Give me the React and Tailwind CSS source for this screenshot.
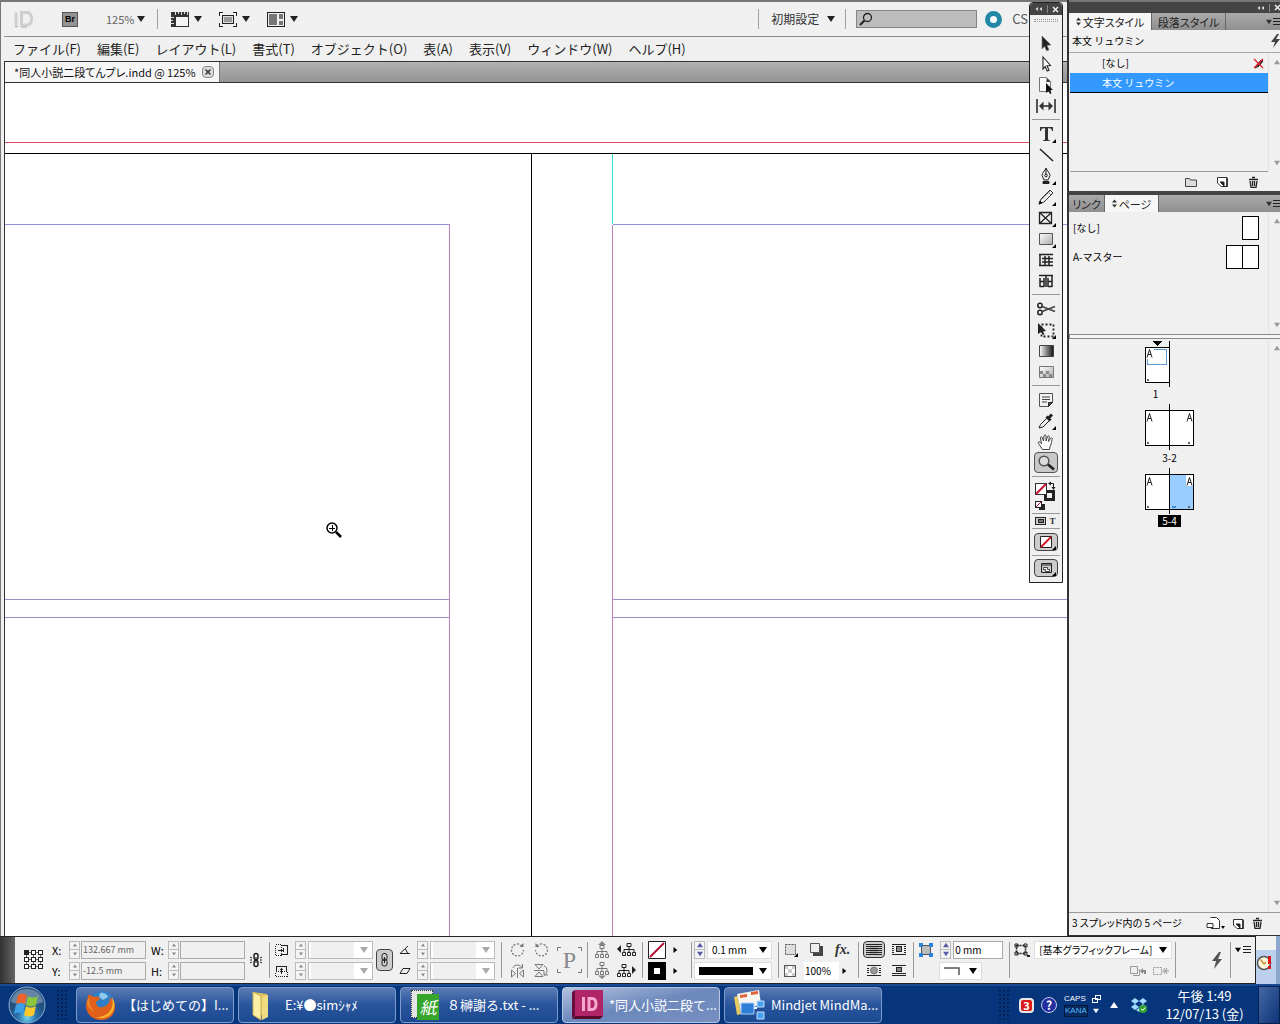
import React, { useState } from 'react';

const menus = ['ファイル(F)', '編集(E)', 'レイアウト(L)', '書式(T)', 'オブジェクト(O)', '表(A)', '表示(V)', 'ウィンドウ(W)', 'ヘルプ(H)'];

// Small filled triangles used all over the chrome
function Caret({ dir = 'down', className = 'w-2 h-2 text-[#222]' }) {
  const d = {
    down: 'M0 1h8L4 7z',
    up: 'M0 7h8L4 1z',
    right: 'M2 0v8l5-4z',
    left: 'M6 0v8L1 4z',
  }[dir];
  return (
    <svg viewBox="0 0 8 8" className={`shrink-0 ${className}`} fill="currentColor" aria-hidden="true">
      <path d={d} />
    </svg>
  );
}

function Svg({ w = 20, h = 20, children, className = '', crisp }) {
  return (
    <svg
      width={w}
      height={h}
      viewBox={`0 0 ${w} ${h}`}
      fill="none"
      stroke="#222"
      shapeRendering={crisp ? 'crispEdges' : undefined}
      className={`shrink-0 ${className}`}
      aria-hidden="true"
    >
      {children}
    </svg>
  );
}

function AppBar() {
  return (
    <div className="flex h-[35px] items-center justify-between border-b border-[#8c8c8c] ml-[3px] pl-[10px] pr-[39px]">
      <div className="flex items-center">
        <Svg w={20} h={18}>
          <path d="M2 3v13M7.500 3v12.500h5c3.500 0 5-2 5-6s-1.500-6.500-5-6.500z" stroke="#cfcfcf" strokeWidth="3" transform="translate(0 -.5)" />
          <path d="M1 16.500h3M7 17h6" stroke="#a8a8a8" />
        </Svg>
        <button className="ml-7 h-[15px] w-4 border border-[#555] bg-[#929292] text-[9px] font-bold leading-[13px] text-black font-['Liberation_Sans',sans-serif]">Br</button>
        <button className="ml-7 flex items-center gap-[7px] text-[11px] leading-4 text-[#666]">
          <span className="w-6">125%</span>
          <Caret />
        </button>
        <span className="ml-3 h-5 w-px bg-[#a0a0a0]" />
        <button className="ml-[13px] flex items-center gap-[5px]" aria-label="表示オプション">
          <Svg w={18} h={15} crisp>
            <path d="M0 0h18v15H0z" fill="#333" stroke="none" />
            <path d="M5 5h12v9H5z" fill="#f4f4f4" stroke="none" />
            <path d="M4 0v3M7 0v2M10 0v3M13 0v2M16 0v3M0 5h3M0 8h2M0 11h3" stroke="#ddd" />
          </Svg>
          <Caret />
        </button>
        <button className="ml-[17px] flex items-center gap-[5px]" aria-label="スクリーンモード">
          <Svg w={18} h={15} crisp>
            <path d="M.5 4V.5H4M14 .5h3.500V4M17.500 11v3.500H14M4 14.500H.5V11" />
            <path d="M3.500 3.500h11v8h-11z" fill="#999" />
            <path d="M4.500 4.500h9v6h-9z" stroke="#ddd" />
          </Svg>
          <Caret />
        </button>
        <button className="ml-[17px] flex items-center gap-[5px]" aria-label="ドキュメントレイアウト">
          <Svg w={18} h={15} crisp>
            <path d="M.5.5h17v14H.5z" fill="#eee" />
            <path d="M2 2h8v11H2zM12 2h4v5h-4zM12 9h4v4h-4z" fill="#777" stroke="none" />
          </Svg>
          <Caret />
        </button>
      </div>
      <div className="flex items-center">
        <span className="h-5 w-px bg-[#a0a0a0]" />
        <button className="ml-3 flex items-center gap-2 text-[12px] leading-4 text-[#333]">
          初期設定
          <Caret />
        </button>
        <span className="ml-[10px] h-5 w-px bg-[#a0a0a0]" />
        <label className="ml-[10px] flex h-[18px] w-[121px] items-center border border-[#858585] bg-[#bdbdbd] pl-0.5">
          <Svg w={14} h={14}>
            <circle cx="8.500" cy="5.500" r="4" strokeWidth="1.300" />
            <path d="M5.500 8.500L1 13" strokeWidth="2" />
          </Svg>
          <input type="search" aria-label="検索" className="min-w-0 flex-1 bg-transparent text-[11px] outline-none" />
        </label>
        <span className="ml-2 size-[17px] rounded-full border-[5px] border-[#2388a8] bg-white" />
        <span className="ml-[10px] text-[13px] leading-4 text-[#555]">CS</span>
      </div>
    </div>
  );
}

function MenuBar() {
  return (
    <nav className="flex h-6 items-center gap-4 pl-3 text-[13px] leading-4 text-[#222]">
      {menus.map((m) => (
        <button key={m} className="whitespace-nowrap">{m}</button>
      ))}
    </nav>
  );
}

function TabStrip() {
  return (
    <div className="ml-[3px] flex h-[22px] border-y border-l border-[#333] bg-linear-to-b from-[#b2b2b2] to-[#939393]">
      <div className="flex items-center gap-1.5 border-r border-[#777] bg-[#f6f6f6] pl-[9px] pr-[5px] text-[11px] leading-4 text-[#111]">
        <span className="whitespace-nowrap [font-feature-settings:'palt']">*同人小説二段てんプレ.indd @ 125%</span>
        <button aria-label="閉じる" className="flex size-3 items-center justify-center rounded-sm border border-[#888] bg-[#ddd]">
          <Svg w={8} h={8}><path d="M1.500 1.500l5 5M6.500 1.500l-5 5" strokeWidth="1.200" /></Svg>
        </button>
      </div>
    </div>
  );
}

// Page edges, bleed, margins and column guides of the open spread
function Canvas() {
  return (
    <main className="relative ml-[3px] min-h-0 flex-1 overflow-hidden border-l border-[#333] bg-white">
      <svg className="absolute inset-0 h-full w-full" shapeRendering="crispEdges" fill="none">
        <path d="M0 59.500H4000" stroke="#e0505f" />
        <path d="M0 70.500H4000M526.500 70V4000" stroke="#000" />
        <path d="M607.500 71V141" stroke="#30e4e0" />
        <path d="M0 141.500H445M608 141.500H4000" stroke="#9090dc" />
        <path d="M0 516.500H445M0 534.500H445M608 516.500H4000M608 534.500H4000" stroke="#9a90c4" />
        <path d="M444.500 141V4000M607.500 142V4000" stroke="#c080c0" />
        <circle cx="327" cy="445" r="5" stroke="#000" strokeWidth="1.500" shapeRendering="auto" />
        <path d="M324 445.500h6M327.500 442v6" stroke="#000" />
        <path d="M331 449l5 5" stroke="#000" strokeWidth="2.500" shapeRendering="auto" />
      </svg>
    </main>
  );
}

const corner = <path d="M20 15v4h-4z" fill="#000" stroke="none" />;

const toolGroups = [
  [
    ['選択', <path key="a" d="M6 3l9 9-4 .3 2 4.500-2.500 1-2-4.500L6 16z" fill="#222" stroke="#777" strokeWidth=".7" />],
    ['ダイレクト選択', <path key="a" d="M7 3l7.500 8.500-3.500.3 2 4.500-1.800.8-2-4.500L7 15z" fill="#fff" strokeWidth="1.100" />],
    ['ページ', <g key="a"><path d="M3.500 2.500h7l4 4v10h-11z" fill="#fafafa" stroke="#777" /><path d="M10.500 3v4h4z" fill="#333" stroke="none" /><path d="M10 8l7 7-3 .3 1.500 3-1.500.7-1.500-3L10 18z" fill="#111" stroke="none" /></g>],
    ['間隔', <g key="a"><path d="M1 3v14M19 3v14" strokeWidth="1.500" /><path d="M5 10h10" strokeWidth="1.500" /><path d="M7.500 5.500L3 10l4.500 4.500zM12.500 5.500L17 10l-4.500 4.500z" fill="#333" stroke="none" /></g>],
  ],
  [
    ['文字', <g key="a"><path d="M4 3h13v4h-1c-.3-2-1-2.700-3-2.700h-1V15c0 1 .5 1.300 2 1.300V17H7v-.7c1.500 0 2-.3 2-1.300V4.300H8C6 4.300 5.300 5 5 7H4z" fill="#333" stroke="none" />{corner}</g>],
    ['線', <path key="a" d="M4 4l13 12" strokeWidth="1.500" />],
    ['ペン', <g key="a"><path d="M10 2c-1 3-4 5-4 7.500L8 14h4l2-4.500C14 7 11 5 10 2z" fill="#eee" /><path d="M10 3v6" /><circle cx="10" cy="9.500" r="1.300" /><path d="M7 15.500h6v2H7z" fill="#222" />{corner}</g>],
    ['鉛筆', <g key="a"><path d="M3 17l2-5 9-9 3 3-9 9z" fill="#eee" stroke="#333" /><path d="M3 17l1-3 2 2z" fill="#000" /><path d="M6 12l8-8M12 5l3 3" stroke="#888" />{corner}</g>],
    ['長方形フレーム', <g key="a"><path d="M3.500 4.500h12v11h-12zM3.500 4.500l12 11M15.500 4.500l-12 11" strokeWidth="1.300" />{corner}</g>],
    ['長方形', <g key="a"><path d="M3.500 4.500h13v11h-13z" fill="url(#rectFill)" stroke="#555" />{corner}</g>],
    ['横組みグリッド', <path key="a" d="M3 4.500h14M4 4v11M6 8.500h11M6 12h11M3 15.500h14M9 6v9M13 6v9" strokeWidth="1.500" />],
    ['縦組みグリッド', <path key="a" d="M3 4.500h14M4 7v9M8 7v9M4 10.500h4M4 15.500h4M12 7v9M16 5v11M12 10.500h4M12 15.500h4M10 5v11" strokeWidth="1.500" />],
  ],
  [
    ['はさみ', <g key="a"><circle cx="4" cy="6.500" r="2.200" strokeWidth="1.500" /><circle cx="4" cy="13.500" r="2.200" strokeWidth="1.500" /><path d="M6 7.500l13 5M6 12.500l13-5" stroke="#444" strokeWidth="1.800" /></g>],
    ['自由変形', <g key="a"><path d="M5.500 4.500h12v12h-12z" strokeDasharray="2 2" strokeWidth="1.800" /><path d="M2 3l8 8-3 .5 1.500 3-1.500.5-2-3L2 14z" fill="#222" stroke="none" />{corner}</g>],
    ['グラデーション', <path key="a" d="M3.500 4.500h14v11h-14z" fill="url(#gradTool)" stroke="#444" />],
    ['ぼかし', <g key="a"><path d="M3.500 4.500h14v11h-14z" fill="url(#rectFill)" stroke="#777" /><path d="M4 9h3v3H4zM10 9h3v3h-3zM7 12h3v3H7zM13 12h3v3h-3z" fill="#888" stroke="none" /></g>],
  ],
  [
    ['注釈', <g key="a"><path d="M3.500 3.500h13v9l-4 4h-9z" fill="#f2f2f2" stroke="#555" /><path d="M6 7h8M6 9.500h8M6 12h5" stroke="#444" /><path d="M16.500 12.500h-4v4z" fill="#555" /></g>],
    ['スポイト', <g key="a"><path d="M3 17l1.500-3.500 7-7 2.500 2.500-7 7z" fill="#eee" /><path d="M10.500 5.500l4 4M12.500 7l3.500-3.500" strokeWidth="3" />{corner}</g>],
    ['手のひら', <path key="a" d="M6.500 17.500l-4-6c-1-1.500.5-2.300 1.500-1.200l1.500 1.500L4.500 6c-.2-1.500 1.400-1.600 1.800-.3L7.500 9 8 4c.2-1.500 2-1.500 2 0v5l1.500-4.500c.5-1.300 2-1 1.800.4L12.500 9.500l2-3c.8-1.200 2.200-.4 1.700.9-1 2.500-.7 5-2.200 7.100l-.5 3z" fill="#fff" stroke="#444" />],
    ['ズーム', <g key="a"><circle cx="8" cy="8" r="4.800" fill="#ddd" stroke="#555" strokeWidth="1.500" /><path d="M12 11.500l6 5" strokeWidth="2.800" /></g>],
  ],
];

function ToolSeparator() {
  return <div className="mx-0.5 my-[3px] h-px bg-[#999]" />;
}

function Toolbox() {
  const [active, setActive] = useState('ズーム');
  return (
    <aside className="absolute right-1 top-0 z-10 w-[34px] rounded-t border border-[#222] bg-[#f0f0f0]">
      <div className="flex h-3 items-center justify-end gap-1 rounded-t bg-[#444] pr-[3px] text-[#ddd]">
        <span className="flex">
          <Caret dir="left" className="h-2 w-1" />
          <Caret dir="left" className="h-2 w-1" />
        </span>
        <span className="h-2 w-px bg-[#888]" />
        <Svg w={7} h={7}><path d="M1 1l5 5M6 1L1 6" stroke="#eee" strokeWidth="1.500" /></Svg>
      </div>
      <div className="mx-1 mt-1 mb-[10px] h-[3px] border-y border-dotted border-[#999]" />
      <svg width="0" height="0" className="absolute" aria-hidden="true">
        <defs>
          <linearGradient id="rectFill" x2="1" y2="1"><stop stopColor="#fff" /><stop offset="1" stopColor="#aaa" /></linearGradient>
          <linearGradient id="gradTool"><stop stopColor="#fff" /><stop offset="1" stopColor="#111" /></linearGradient>
        </defs>
      </svg>
      {toolGroups.map((group, i) => (
        <div key={i}>
          {i > 0 && <ToolSeparator />}
          {group.map(([name, icon]) => (
            <button
              key={name}
              aria-label={name}
              onClick={() => setActive(name)}
              className={`mx-auto flex h-[21px] w-6 items-center justify-center ${active === name ? 'rounded-sm border border-[#555] bg-[#c8c8c8]' : ''}`}
            >
              <Svg>{icon}</Svg>
            </button>
          ))}
        </div>
      ))}
      <ToolSeparator />
      <div className="flex justify-center">
        <Svg w={24} h={30} crisp>
          <path d="M11.500 11.500h8v8h-8z" fill="#f0f0f0" stroke="#222" strokeWidth="3" />
          <path d="M1.500 3.500h11v11h-11z" fill="#fff" stroke="#333" />
          <path d="M2 14L12 4" stroke="#c01030" strokeWidth="2" shapeRendering="auto" />
          <path d="M16 3.500h3.500V8" shapeRendering="auto" />
          <path d="M17 1.500l-3 2 3 2zM17.500 7h4l-2 3z" fill="#222" stroke="none" shapeRendering="auto" />
          <path d="M5.500 24.500h5v5h-5z" fill="#222" />
          <path d="M1.500 21.500h6v6h-6z" fill="#fff" />
          <path d="M2 27l5-5" stroke="#c01030" shapeRendering="auto" />
        </Svg>
      </div>
      <ToolSeparator />
      <div className="flex h-2 items-center justify-center gap-1">
        <Svg w={11} h={8} crisp><path d="M.5.5h10v7H.5z" fill="#ccc" /><path d="M3 2.500h5v3H3z" fill="#777" /></Svg>
        <span className="w-2 text-[9px] font-bold leading-2 text-[#333] font-['Liberation_Serif',serif]">T</span>
      </div>
      <ToolSeparator />
      <button aria-label="適用なし" className="mx-auto my-1 flex h-[18px] w-6 items-center justify-center rounded-sm border border-[#444] bg-[#ccc]">
        <Svg w={20} h={16}>
          <path d="M4.500 2.500h11v11h-11z" fill="#fff" />
          <path d="M5 13L15 3" stroke="#d01020" strokeWidth="1.800" />
          <path d="M20 12v4h-4z" fill="#000" stroke="none" />
        </Svg>
      </button>
      <ToolSeparator />
      <button aria-label="標準モード" className="mx-auto mt-[3px] mb-[5px] flex h-[18px] w-6 items-center justify-center rounded-sm border border-[#444] bg-[#ccc]">
        <Svg w={20} h={16}>
          <path d="M5.500 3.500h10v9h-10zM5.500 5h10" />
          <path d="M7.500 7.500h4v2h2v2h-4v-2h-2z" fill="#fff" strokeWidth=".8" />
          <path d="M20 12v4h-4z" fill="#000" stroke="none" />
        </Svg>
      </button>
    </aside>
  );
}

function PanelTabs({ tabs, active }) {
  return (
    <div role="tablist" className="flex h-[17px] shrink-0 items-stretch bg-linear-to-b from-[#aaa] to-[#8f8f8f] text-[11px] leading-[16px] text-[#222] [font-feature-settings:'palt']">
      {tabs.map(([t, width]) => (
        <button
          key={t}
          role="tab"
          aria-selected={t === active}
          className={`flex items-center justify-center gap-0.5 whitespace-nowrap border-r border-[#666] ${width} ${t === active ? 'bg-[#f6f6f6]' : ''}`}
        >
          {t === active && (
            <Svg w={5} h={9}><path d="M0 3.500L2.500.5 5 3.500zM0 5.500l2.500 3 2.500-3z" fill="#333" stroke="none" /></Svg>
          )}
          {t}
        </button>
      ))}
      <span className="flex flex-1 items-center justify-end gap-px">
        <Caret className="h-1.5 w-1.5 text-[#333]" />
        <Svg w={7} h={9} crisp><path d="M0 1.500h7M0 4.500h7M0 7.500h7" /></Svg>
      </span>
    </div>
  );
}

function ScrollTrack() {
  return (
    <div className="flex w-3 shrink-0 flex-col items-end justify-between border-l border-[#e4e4e4] py-1.5">
      <Caret dir="up" className="h-1.5 w-1.5 text-[#999]" />
      <Caret className="h-1.5 w-1.5 text-[#999]" />
    </div>
  );
}

const folderIcon = <Svg w={12} h={10}><path d="M.5 1.500h4l1 1.500h6v6.500H.5z" fill="#ddd" stroke="#444" /></Svg>;
const newIcon = <Svg w={11} h={11}><path d="M.5 1.500h9.500v9H4L.5 7z" fill="#fff" stroke="#333" /><path d="M10 2v9H5" strokeWidth="1.500" /><path d="M3 6h4v4z" fill="#222" /></Svg>;
const trashIcon = <Svg w={11} h={12}><path d="M1 3.500h9M4 1.500h3M2 5l1 6.500h5L9 5M4.500 5v5M6.500 5v5" strokeWidth="1.300" /></Svg>;

function SheetPair({ selected, className = '' }) {
  return (
    <svg width="49" height="46" viewBox="0 0 49 46" shapeRendering="crispEdges" className={className} aria-hidden="true">
      <path d="M.5 6.500h48v35H.5z" fill="#fff" stroke="#000" />
      {selected && <path d="M25 7h23v34H25z" fill="#99ccff" />}
      {selected && <path d="M41 7h7v11h-7z" fill="#fff" />}
      <path d="M24.500 0v46" stroke="#000" />
      <path d="M2 17.500L4.500 9.500l2.500 8M3 14.500h3M42 17.500l2.500-8 2.500 8M43 14.500h3" fill="none" stroke="#222" shapeRendering="auto" />
      <path d="M2 38h2v2H2zM43 38h2v2h-2z" fill="#666" />
      {selected && <path d="M27 38h4v2h-4z" fill="#4a8fd0" />}
    </svg>
  );
}

function StylesPanel() {
  return (
    <section className="flex h-[178px] shrink-0 flex-col">
      <PanelTabs tabs={[['文字スタイル', 'w-[83px]'], ['段落スタイル', 'w-[74px]']]} active="文字スタイル" />
      <div className="flex h-[23px] items-center justify-between border-b border-[#aaa] pl-[3px] text-[10px] leading-4">
        <span>本文 リュウミン</span>
        <Svg w={9} h={14}><path d="M6 0L0 8h4l-2 6 7-9H5l3-5z" fill="#444" stroke="none" /></Svg>
      </div>
      <div className="flex min-h-0 flex-1">
        <ul className="ml-px flex-1 border-b border-[#999] text-[10px] leading-4">
          <li className="flex h-5 items-center justify-between pl-8 pr-1">
            [なし]
            <Svg w={11} h={11}><path d="M2 10l2-3 4-5 2 1-4 5z" fill="#333" /><path d="M1 1l9 9M10 1L1 10" stroke="#e8202c" strokeWidth="1.300" /></Svg>
          </li>
          <li className="flex h-5 items-center border-b border-black bg-[#3399ff] pl-8 text-white">本文 リュウミン</li>
        </ul>
        <ScrollTrack />
      </div>
      <div className="flex h-[19px] shrink-0 items-center justify-end gap-5 pr-[21px]">
        {folderIcon}
        {newIcon}
        {trashIcon}
      </div>
    </section>
  );
}

function PagesPanel() {
  return (
    <section className="flex min-h-0 flex-1 flex-col border-t-4 border-[#444]">
      <PanelTabs tabs={[['リンク', 'w-[36px]'], ['ページ', 'w-[54px]']]} active="ページ" />
      <div className="flex h-[122px] shrink-0">
        <div className="flex-1 pl-1 pr-[9px] pt-px text-[10px] leading-4">
          <div className="flex h-[29px] items-center justify-between">
            [なし]
            <span className="h-6 w-[17px] border border-black bg-white" />
          </div>
          <div className="flex h-[29px] items-center justify-between">
            A-マスター
            <span className="flex h-6 w-[33px] border border-black bg-white">
              <span className="w-4 border-r border-black" />
            </span>
          </div>
        </div>
        <ScrollTrack />
      </div>
      <div className="h-[5px] shrink-0 border border-r-0 border-[#888] bg-[#f6f6f6]" />
      <div className="flex min-h-0 flex-1">
        <div className="flex flex-1 flex-col items-center pt-px pl-0.5 text-[10px] leading-3">
          <svg width="49" height="48" viewBox="0 0 49 48" shapeRendering="crispEdges" aria-hidden="true">
            <path d="M8 1h9l-4.500 5z" />
            <path d="M.5 7.500h24v35H.5z" fill="#fff" stroke="#000" />
            <path d="M24.500 1v46" stroke="#000" />
            <path d="M9 9.500h12.500v15h-19V19" fill="none" stroke="#5b9bd5" />
            <path d="M2 17.500L4.500 9.500l2.500 8M3 14.500h3" fill="none" stroke="#222" shapeRendering="auto" />
            <path d="M2 39h2v2H2z" fill="#666" />
          </svg>
          <span className="mr-7">1</span>
          <SheetPair className="mt-1" />
          <span className="mt-0.5">3-2</span>
          <SheetPair selected className="mt-1" />
          <span className="mt-px bg-black px-1 text-white">5-4</span>
        </div>
        <ScrollTrack />
      </div>
      <div className="flex h-[23px] shrink-0 items-center border-t border-[#999] pl-[3px] pr-[17px] pb-0.5 text-[10px] leading-4">
        <span className="flex-1 whitespace-nowrap [font-feature-settings:'palt']">3 スプレッド内の 5 ページ</span>
        <span className="flex items-center gap-2">
          <Svg w={19} h={12}><path d="M4.500.5h6l3 3v8H5M1 6.500h6v4H1z" fill="#fff" stroke="#333" /><path d="M15 9h4l-2 3z" fill="#000" stroke="none" /></Svg>
          {newIcon}
          {trashIcon}
        </span>
      </div>
    </section>
  );
}

function SidePanels() {
  return (
    <aside className="flex w-[213px] shrink-0 flex-col border-b border-l-2 border-[#333] bg-[#f0f0f0] text-black">
      <div className="flex h-[13px] shrink-0 items-center justify-end gap-1 border-t-2 border-[#777] bg-[#444] text-[#ddd]">
        <span className="flex">
          <Caret dir="left" className="h-2 w-1" />
          <Caret dir="left" className="h-2 w-1" />
        </span>
        <span className="h-2 w-px bg-[#888]" />
        <Svg w={6} h={7}><path d="M1 1l5 5M6 1L1 6" stroke="#eee" strokeWidth="1.500" /></Svg>
      </div>
      <StylesPanel />
      <PagesPanel />
    </aside>
  );
}

function Spinner({ on }) {
  const color = on ? 'h-1.5 w-1.5 text-[#5a5aa8]' : 'h-1 w-1 text-[#888]';
  return (
    <span className="flex h-[18px] w-[11px] shrink-0 flex-col border border-[#bbb] bg-[#f4f4f4]">
      <span className="flex flex-1 items-center justify-center border-b border-[#bbb]"><Caret dir="up" className={color} /></span>
      <span className="flex flex-1 items-center justify-center"><Caret className={color} /></span>
    </span>
  );
}

function NumberField({ label, value = '' }) {
  return (
    <label className="flex items-center gap-px text-[11px] leading-4">
      <span className="w-4">{label}:</span>
      <Spinner />
      <input defaultValue={value} className="h-[18px] w-[65px] border border-[#aaa] bg-[#f0f0f0] pl-px text-[9px] text-[#666]" />
    </label>
  );
}

function Combo({ label, value = '', width, disabled, children }) {
  return (
    <span className={`relative flex h-[18px] items-center border ${width} ${disabled ? 'border-[#bbb] bg-white' : 'border-[#ddd] bg-white'}`}>
      <select aria-label={label} disabled={disabled} className={`h-full w-full appearance-none px-1 text-[10px] leading-4 [font-feature-settings:'palt'] ${disabled ? 'm-0.5 mr-[18px] h-3.5 bg-[#f0f0f0]' : 'bg-transparent'}`}>
        <option>{value}</option>
      </select>
      <span className="pointer-events-none absolute inset-y-0 left-1 flex items-center">{children}</span>
      <span className="pointer-events-none absolute inset-y-0 right-1 flex items-center">
        <Caret className={disabled ? 'size-2 text-[#aaa]' : 'size-2 text-black'} />
      </span>
    </span>
  );
}

function Rows({ children, className = '' }) {
  return <div className={`flex shrink-0 flex-col justify-center gap-[3px] ${className}`}>{children}</div>;
}

function Row({ children, className = '' }) {
  return <div className={`flex h-[18px] items-center ${className}`}>{children}</div>;
}

function Rule({ className = '' }) {
  return <span className={`h-9 w-px shrink-0 bg-[#999] ${className}`} />;
}

const tree = (
  <path d="M5 .5h4v3H5zM7 3.500v3M2 9V6.500h10V9M7 6.500V9M.5 9.500h3v3h-3zM5.500 9.500h3v3h-3zM10.500 9.500h3v3h-3z" />
);

function ControlBar() {
  return (
    <div className="flex h-12 shrink-0 bg-[#f0f0f0]">
      <div className="flex min-w-0 flex-1 items-center border-y border-r border-[#222]">
        <div className="h-full w-[15px] shrink-0 bg-linear-to-r from-[#333] to-[#666]" />
        <Svg w={20} h={20} crisp className="ml-[9px]">
          <path d="M3 2.500h14M3 9.500h14M3 16.500h14M2.500 3v14M9.500 3v14M16.500 3v14" stroke="#666" />
          {[0, 7, 14].map((y) => [0, 7, 14].map((x) => (
            <path key={`${x}-${y}`} d={`M${x + 0.5} ${y + 0.5}h4v4h-4z`} fill={x + y === 0 ? '#222' : '#fff'} />
          )))}
        </Svg>
        <Rows className="ml-2">
          <NumberField label="X" value="132.667 mm" />
          <NumberField label="Y" value="-12.5 mm" />
        </Rows>
        <Rows className="ml-[5px]">
          <NumberField label="W" />
          <NumberField label="H" />
        </Rows>
        <Svg w={14} h={16} className="ml-1">
          <rect x="5" y="1.500" width="4" height="6" rx="2" strokeWidth="1.500" />
          <rect x="5" y="8.500" width="4" height="6" rx="2" strokeWidth="1.500" />
          <path d="M1 5l2 1M11 6l2-1M1 11l2-1M11 10l2 1M1 8h2M11 8h2M7 5v6" />
        </Svg>
        <Rule className="ml-1.5" />
        <Rows className="ml-[5px]">
          {['拡大・縮小 X', '拡大・縮小 Y'].map((label, i) => (
            <Row key={label}>
              <Svg w={13} h={12} crisp>
                {i === 0 ? (
                  <g><path d="M.5.5h6v11h-6z" strokeDasharray="1 1" /><path d="M6 1.500h6v9H6M3 6h6M8 4v4" /></g>
                ) : (
                  <g><path d="M.5 6.500h12v5H.5z" strokeDasharray="1 1" /><path d="M1.500 7V1.500h10V7M6.500 3v6M5 4.500h3" /></g>
                )}
              </Svg>
              <span className="ml-[7px]"><Spinner /></span>
              <Combo label={label} disabled width="ml-0.5 w-[65px]" />
            </Row>
          ))}
        </Rows>
        <button aria-label="縦横比を固定" className="ml-[3px] flex h-[22px] w-[17px] items-center justify-center rounded-sm border border-[#444] bg-[#ccc]">
          <Svg w={9} h={16}>
            <rect x="2" y="1.500" width="5" height="7" rx="2" />
            <rect x="2" y="7" width="5" height="7" rx="2" />
            <path d="M4.500 5v6" />
          </Svg>
        </button>
        <Rows className="ml-1.5">
          {['回転角度', '傾斜角度'].map((label, i) => (
            <Row key={label}>
              <Svg w={12} h={10}>
                {i === 0 ? <path d="M9 1L1 8.500h10M6.500 4l2 4" /> : <path d="M4 2.500h7L8 7.500H1z" />}
              </Svg>
              <span className="ml-1.5"><Spinner /></span>
              <Combo label={label} disabled width="ml-0.5 w-[65px]" />
            </Row>
          ))}
        </Rows>
        <Rule className="ml-1.5" />
        <Rows className="ml-2">
          <Row className="gap-[9px]">
            <Svg w={15} h={15}><path d="M12 4a6 6 0 1 0 1.500 4" stroke="#777" strokeWidth="1.300" strokeDasharray="2 1.500" /><path d="M9.500 5h4V1z" fill="#777" stroke="none" /></Svg>
            <Svg w={15} h={15}><path d="M3 4a6 6 0 1 1-1.500 4" stroke="#777" strokeWidth="1.300" strokeDasharray="2 1.500" /><path d="M5.500 5h-4V1z" fill="#777" stroke="none" /></Svg>
          </Row>
          <Row className="gap-[9px]">
            <Svg w={15} h={15}><path d="M1.500 7v7l4-3.500zM13.500 7v7l-4-3.500zM7.500 5v10M3 5c1-4 8-4 9 0M12.500 1v4h-4" stroke="#777" /></Svg>
            <Svg w={15} h={15}><path d="M1 1.500h8L5 6zM1 13.500h8L5 9zM0 7.500h10M10 3c4 1 4 8 0 9M14 12h-4V8" stroke="#777" /></Svg>
          </Row>
        </Rows>
        <div className="relative ml-2 flex h-[26px] w-[25px] shrink-0 items-center justify-center">
          <svg width="25" height="26" fill="none" stroke="#777" className="absolute inset-0" aria-hidden="true">
            <path d="M.5 4V.5H4M21 .5h3.500V4M24.500 22v3.500H21M4 25.500H.5V22" />
          </svg>
          <span className="text-[24px] leading-6 text-[#888] font-['Liberation_Serif',serif]">P</span>
        </div>
        <Rule className="ml-[5px]" />
        <Rows className="ml-[7px]">
          <Row className="gap-2">
            <Svg w={14} h={17}><path d="M3 4h8L7 0z" fill="#888" stroke="none" /><g stroke="#777" transform="translate(0 4)">{tree}</g></Svg>
            <Svg w={19} h={14}><path d="M4 2v8L0 6z" fill="#222" stroke="none" /><g transform="translate(5)">{tree}</g></Svg>
          </Row>
          <Row className="gap-2">
            <Svg w={14} h={17}><path d="M3 13.500h8l-4 3.500z" fill="#888" stroke="none" /><g stroke="#777">{tree}</g></Svg>
            <Svg w={19} h={14}><path d="M15 2v8l4-4z" fill="#222" stroke="none" />{tree}</Svg>
          </Row>
        </Rows>
        <Rule className="ml-1.5" />
        <Rows className="ml-[5px]">
          <Row className="gap-1.5">
            <Svg w={18} h={18}><path d="M.5.5h17v17H.5z" fill="#fff" /><path d="M2 16L16 2" stroke="#b01030" strokeWidth="2" /></Svg>
            <Caret dir="right" className="size-1.5 text-black" />
          </Row>
          <Row className="gap-1.5">
            <Svg w={18} h={18}><path d="M0 0h18v18H0z" fill="#000" stroke="none" /><path d="M6 6h6v6H6z" fill="#fff" stroke="none" /></Svg>
            <Caret dir="right" className="size-1.5 text-black" />
          </Row>
        </Rows>
        <Rule className="ml-[13px]" />
        <Rows className="ml-0.5">
          <Row className="gap-0.5">
            <Spinner on />
            <Combo label="線幅" value="0.1 mm" width="w-[65px]" />
          </Row>
          <Combo label="線種" width="w-[78px]"><span className="h-2 w-[54px] bg-black" /></Combo>
        </Rows>
        <Rule className="ml-1.5" />
        <Rows className="ml-[5px]">
          <Row className="gap-3">
            <Svg w={14} h={14}><path d="M1.500 1.500h10v10h-10z" fill="#ddd" stroke="#555" strokeDasharray="2 1" /><path d="M14 10v4h-4z" fill="#000" stroke="none" /></Svg>
            <Svg w={13} h={13}><path d="M3 3h10v10H3z" fill="#444" stroke="none" /><path d="M.5.5h9v9h-9z" fill="#eee" stroke="#555" /></Svg>
            <span className="text-[14px] italic font-bold leading-4 text-[#333] font-['Liberation_Serif',serif]">fx.</span>
          </Row>
          <Row>
            <Svg w={12} h={12} crisp><path d="M.5.5h11v11H.5z" fill="#fff" stroke="#555" /><path d="M1 1h3v3H1zM8 1h3v3H8zM4 4h4v4H4zM1 8h3v3H1zM8 8h3v3H8z" fill="#ccc" stroke="none" /></Svg>
            <input aria-label="不透明度" defaultValue="100%" className="ml-2 h-[18px] w-[35px] bg-white pl-px text-[10px]" />
            <Caret dir="right" className="ml-0.5 size-1.5 text-black" />
          </Row>
        </Rows>
        <Rule className="ml-2" />
        <Rows className="ml-1">
          <Row className="gap-[7px]">
            <button aria-label="回り込みなし" className="flex h-[17px] w-[22px] items-center justify-center rounded-sm border border-[#333] bg-[#ccc]">
              <Svg w={16} h={13} crisp><path d="M4 4h8v7H4z" fill="#aaa" stroke="none" /><path d="M0 1.500h16M0 3.500h16M0 5.500h16M0 7.500h16M0 9.500h16M0 11.500h16" /></Svg>
            </button>
            <Svg w={14} h={13} crisp><path d="M0 1.500h14M0 11.500h14M0 3.500h2M12 3.500h2M0 5.500h2M12 5.500h2M0 7.500h2M12 7.500h2M0 9.500h2M12 9.500h2" /><path d="M4.500 3.500h5v5h-5z" fill="#888" /></Svg>
          </Row>
          <Row className="gap-[11px] pl-1">
            <Svg w={14} h={13}><path d="M0 1.500h14M0 11.500h14M0 4.500h2M12 4.500h2M0 6.500h2M12 6.500h2M0 8.500h2M12 8.500h2" /><circle cx="7" cy="6.500" r="3.500" fill="#999" stroke="#777" /></Svg>
            <Svg w={14} h={13} crisp><path d="M0 1.500h14M0 11.500h14M0 9.500h14" /><path d="M4.500 3.500h5v4h-5z" fill="#888" /></Svg>
          </Row>
        </Rows>
        <Rule className="ml-[7px]" />
        <Rows className="ml-[5px]">
          <Row>
            <Svg w={14} h={14}><path d="M2.500 2.500h9v9h-9z" fill="#bbb" stroke="#555" /><path d="M0 0h4v4H0zM10 0h4v4h-4zM0 10h4v4H0zM10 10h4v4h-4z" fill="#2a86d8" stroke="none" /></Svg>
            <span className="ml-[7px]"><Spinner on /></span>
            <input aria-label="角のサイズ" defaultValue="0 mm" className="ml-0.5 h-[18px] w-[50px] border border-[#aaa] bg-white pl-px text-[10px]" />
          </Row>
          <Row className="pl-5">
            <Combo label="角の形状" width="w-[43px]">
              <Svg w={16} h={8}><path d="M0 1h15v7" stroke="#555" strokeWidth="1.500" /></Svg>
            </Combo>
          </Row>
        </Rows>
        <Rule className="ml-1.5" />
        <Rows className="ml-1">
          <Row className="gap-1">
            <Svg w={16} h={14}><path d="M2.500 2.500h9v8h-9z" strokeDasharray="2 1" strokeWidth="1.500" /><path d="M1 1h3v3H1zM10 1h3v3h-3zM1 9h3v3H1zM10 9h3v3h-3z" /><path d="M13 13h3" strokeWidth="2" /></Svg>
            <Combo label="オブジェクトスタイル" value="[基本グラフィックフレーム]" width="w-[138px]" />
          </Row>
          <Row className="justify-end gap-1.5 pr-0.5">
            <Svg w={17} h={10}><path d="M.5.5h7v7h-7zM3 9.500h6.500V3" stroke="#999" /><path d="M10 5l3-3v2h3v4h-2V6h-1v2z" fill="#888" stroke="none" /></Svg>
            <Svg w={17} h={10}><path d="M.5 1.500h8v7h-8z" stroke="#999" strokeDasharray="2 1" /><path d="M9 5h7M14 2l-3 6M11 2l3 6" stroke="#999" /></Svg>
          </Row>
        </Rows>
        <Rule className="ml-[3px]" />
        <div className="flex flex-1 justify-end pr-[7px]">
          <Svg w={12} h={17}><path d="M8 0L1 9h4l-2 8 8-10H7l3-7z" fill="#555" stroke="none" /></Svg>
        </div>
        <Rule />
        <div className="flex w-6 shrink-0 items-center justify-center gap-0.5 self-start pt-2">
          <Caret className="size-1.5 text-black" />
          <Svg w={8} h={9} crisp><path d="M0 1.500h8M0 4.500h8M0 7.500h8" /></Svg>
        </div>
      </div>
      <div className="flex w-6 shrink-0 items-center border-r-4 border-[#8da8cf] bg-linear-to-b from-[#f2f2f2] from-30% to-[#bcd0ee] to-30%">
        <Svg w={18} h={18} className="mt-1.5">
          <circle cx="8" cy="9" r="6.500" fill="#fff6dc" stroke="#555" strokeWidth="1.500" />
          <path d="M4.500 5.500L8 10l2-2" stroke="#c88a20" strokeWidth="1.300" />
          <path d="M13.500 2v8M13.500 12v3" stroke="#d81818" strokeWidth="3" />
        </Svg>
      </div>
    </div>
  );
}

const tasks = [
  {
    title: '【はじめての】I...',
    icon: (
      <Svg w={32} h={32}>
        <circle cx="17" cy="14" r="12" fill="#2f7fc8" stroke="none" />
        <path d="M15 4c4-1 7 1 8 4l-5 3-4-3z" fill="#8cc8ec" stroke="none" />
        <path d="M4 5c2 2 4 2 6 3 2-1 4 0 5 2l-4 3c0 4 3 6 7 5 4-1 7-4 7-10 3 3 5 6 5 10 0 8-6 13-14 13S1 25 1 17C1 12 3 9 4 5z" fill="#e0601c" stroke="none" />
        <path d="M27 8c4 6 3 13-2 18-4 3-9 4-14 2 7 0 11-2 14-6 3-4 3-9 2-14z" fill="#f7b52c" stroke="none" />
        <path d="M4 8c0 6 1 11 6 15-5-2-8-6-8-10z" fill="#f08a28" stroke="none" />
      </Svg>
    ),
  },
  {
    title: 'E:¥●simｼｬﾒ',
    icon: (
      <Svg w={32} h={32}>
        <path d="M6 3l14 2v22l-14-2z" fill="#e2c458" stroke="none" />
        <path d="M6 3l8 4v24l-8-5z" fill="#fbeea5" stroke="#d0b050" />
        <path d="M15 8l6-2v22l-6 3z" fill="#f0dc80" stroke="none" />
      </Svg>
    ),
  },
  {
    title: '８榊謝る.txt - ...',
    icon: (
      <span className="relative mx-0.5 block h-[30px] w-7">
        <span className="absolute left-0 top-0 h-7 w-[22px] border border-dotted border-[#333] bg-[#e4e4e4]" />
        <span className="absolute bottom-0 right-0 flex h-[26px] w-[22px] items-center justify-center bg-[#35a52c] text-[17px] italic leading-6 text-white">紙</span>
      </span>
    ),
  },
  {
    title: '*同人小説二段て...',
    active: true,
    icon: (
      <Svg w={32} h={32}>
        <path d="M1 3l3-2v26l-3 2z" fill="#6c0c3c" stroke="none" />
        <path d="M4 1h28v26H4z" fill="#b02468" stroke="none" />
        <path d="M4 27h28l-3 3H1z" fill="#58082e" stroke="none" />
        <path d="M12.500 8v14M18 9.500v11h3c3 0 4-2 4-5.500s-1-5.500-4-5.500z" stroke="#f5a8cc" strokeWidth="3" />
      </Svg>
    ),
  },
  {
    title: 'Mindjet MindMa...',
    icon: (
      <Svg w={32} h={32}>
        <path d="M1 8l4-1 3 18-4 1z" fill="#e8c860" stroke="none" />
        <path d="M4 5l22-4 2 14-20 8z" fill="#f8f4ee" stroke="none" />
        <path d="M7 6l7-1v3l-7 1zM18 3l7-1v3l-7 1z" fill="#e0643a" stroke="none" />
        <path d="M8 14h13v11H8z" fill="#2f7fd8" stroke="#a8d0f8" />
        <path d="M24 12h7v6h-7zM24 23h7v7h-7z" fill="#48a0ee" stroke="#bfe0ff" />
        <path d="M21 19h3" stroke="#fff" strokeWidth="2" />
      </Svg>
    ),
  },
];

function TaskGrip() {
  return (
    <Svg w={10} h={32} crisp className="self-center">
      <path d="M1 1v30M5 1v30M9 1v30" stroke="#052257" strokeWidth="2" strokeDasharray="2 2" />
    </Svg>
  );
}

function Taskbar() {
  return (
    <footer className="flex h-10 shrink-0 items-center border-t-2 border-[#1b4a94] bg-[#06357c] text-white">
      <button aria-label="スタート" className="ml-2 shrink-0">
        <svg width="38" height="38" viewBox="0 0 38 38" aria-hidden="true">
          <defs>
            <radialGradient id="orb" cy=".85"><stop stopColor="#6fd8f0" /><stop offset=".5" stopColor="#2a74b0" /><stop offset="1" stopColor="#24507e" /></radialGradient>
          </defs>
          <circle cx="19" cy="19" r="18" fill="url(#orb)" stroke="#8ab0d0" />
          <path d="M3 16C5 6 12 3 19 3s14 3 16 13c-9 4-23 4-32 0z" fill="#fff" opacity=".3" />
          <path d="M10 9c3-2 6-2 9 0l-2 9c-3-2-6-2-9 0z" fill="#f0622c" />
          <path d="M20 10c3 2 6 2 10 0l-2 9c-4 2-7 2-10 0z" fill="#8cc63c" />
          <path d="M8 19c3-2 6-2 9 0l-2 9c-3-2-6-2-9 0z" fill="#3ca0e8" />
          <path d="M18 20c3 2 6 2 10 0l-2 9c-4 2-7 2-10 0z" fill="#fcc82c" />
        </svg>
      </button>
      <span className="ml-[11px]"><TaskGrip /></span>
      <div className="ml-[9px] flex min-w-0 gap-1">
        {tasks.map((t) => (
          <button
            key={t.title}
            className={`flex h-9 w-[158px] items-center gap-1.5 rounded-sm border pl-2 text-left text-[13px] leading-5 ${t.active ? 'border-[#b8c8e4] bg-linear-to-br from-[#b4c2de] via-[#6c88bc] to-[#7890c0]' : 'border-[#7d9ccc] bg-linear-to-b from-[#5a7cb4] via-[#28549c] to-[#1c4a92]'}`}
          >
            <span className="w-8 shrink-0">{t.icon}</span>
            <span className="flex-1 truncate">{t.title}</span>
          </button>
        ))}
      </div>
      <div className="ml-auto flex items-center">
        <TaskGrip />
        <span className="ml-[10px] flex size-[15px] items-center justify-center rounded-sm border-2 border-[#e8e8e8] bg-[#d81c1c] text-[11px] font-bold leading-3">3</span>
        <span className="ml-[7px] flex size-4 items-center justify-center rounded-full border border-[#c8ccf0] bg-[#2430a0] text-[12px] font-bold leading-3">?</span>
        <div className="ml-[7px] grid grid-cols-[24px_12px] items-center gap-x-0.5 gap-y-px font-['Liberation_Sans',sans-serif] text-[8px] leading-[10px]">
          <span>CAPS</span>
          <Svg w={9} h={8} crisp className="justify-self-center"><path d="M3.500.5h5v4h-5zM.5 3.500h5v4h-5z" stroke="#fff" fill="#06357c" /></Svg>
          <span className="border border-[#02193e] bg-[#0a2c60] text-[8px] text-[#4cb8f8]">KANA</span>
          <Caret className="size-1.5 justify-self-center text-white" />
        </div>
        <Caret dir="up" className="ml-2 size-2 text-white" />
        <Svg w={16} h={16} className="ml-[13px]">
          <path d="M4 1l4 3-4 3-4-3zM12 1l4 3-4 3-4-3zM4 7l4 3-4 3-4-3zM12 7l4 3-4 3-4-3zM8 11l3 2-3 2-3-2z" fill="#a0dcff" stroke="none" />
          <circle cx="12" cy="12" r="4" fill="#30a030" stroke="none" />
          <path d="M10 12l2 1.500 2-3" stroke="#fff" />
        </Svg>
        <div className="ml-1 w-[107px] text-center text-[13px] leading-[18px]">
          <div>午後 1:49</div>
          <div>12/07/13 (金)</div>
        </div>
        <button aria-label="デスクトップの表示" className="h-[38px] w-[22px] border border-[#03204f] bg-linear-to-br from-[#4468a4] to-[#0c3478]" />
      </div>
    </footer>
  );
}

export default function App() {
  return (
    <div className="flex h-screen flex-col overflow-hidden bg-[#f0f0f0] font-['Noto_Sans_CJK_JP',sans-serif]">
      <div className="flex min-h-0 flex-1">
        <div className="relative flex min-w-0 flex-1 flex-col border-t-2 border-l border-[#777]">
          <AppBar />
          <MenuBar />
          <TabStrip />
          <Canvas />
          <Toolbox />
        </div>
        <SidePanels />
      </div>
      <ControlBar />
      <Taskbar />
    </div>
  );
}
